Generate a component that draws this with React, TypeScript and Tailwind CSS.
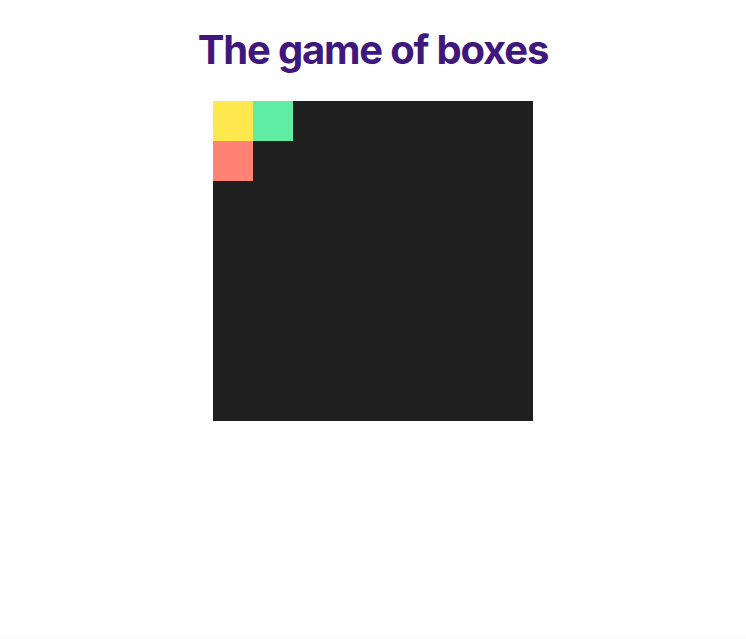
import React from "react";

const SIZE = 8;

const colored: Record<string, string> = {
  "0-0": "bg-[#ffe84e]",
  "0-1": "bg-[#60eca2]",
  "1-0": "bg-[#ff8275]",
};

const App = () => {
  const cells = [];
  for (let r = 0; r < SIZE; r++) {
    for (let c = 0; c < SIZE; c++) {
      const key = `${r}-${c}`;
      cells.push(
        <div key={key} className={`w-10 h-10 ${colored[key] ?? "bg-[#1f1f1f]"}`} />
      );
    }
  }

  return (
    <div className="min-h-[639px] bg-[#fefefe] font-['Inter',sans-serif] border-b border-[#fdf5fd]">
      <div className="flex flex-col items-center pt-[26px]">
        <h1 className="text-[40px] leading-[48px] font-bold tracking-[-0.03em] text-[#40187c]">
          The game of boxes
        </h1>

        {/* Board */}
        <div className="mt-[27px] grid grid-cols-8 w-[320px]">{cells}</div>
      </div>
    </div>
  );
};

export default App;
